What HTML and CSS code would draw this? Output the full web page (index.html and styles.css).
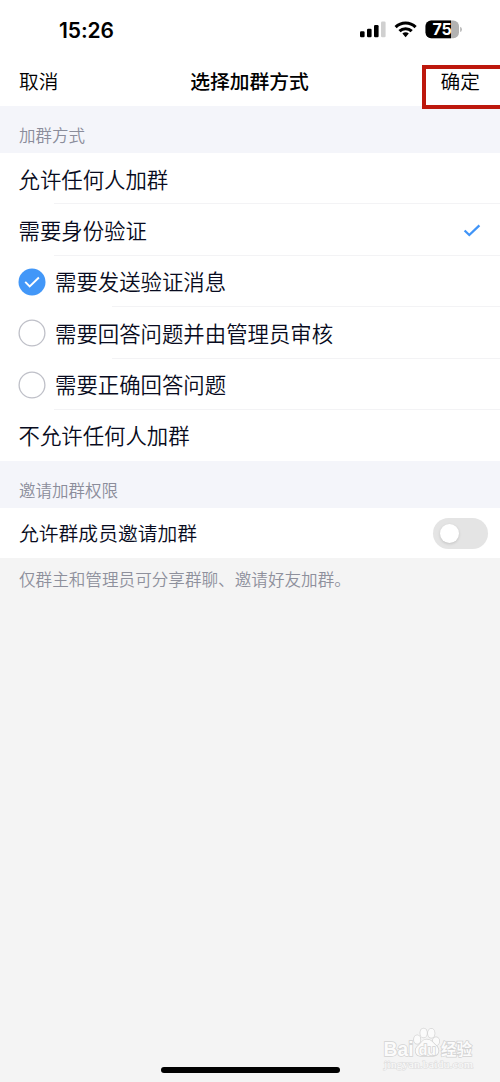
FILE: index.html
```
<!DOCTYPE html>
<html lang="zh-CN">
<head>
<meta charset="utf-8">
<title>选择加群方式</title>
<link rel="stylesheet" href="styles.css">
</head>
<body>
<div class="screen">
  <header class="top">
    <div class="status">
      <span class="time">15:26</span>
      <svg class="status-icons" width="104" height="20" viewBox="0 0 104 20">
        <rect x="0" y="11.2" width="4.6" height="6" rx="1.2"/>
        <rect x="7" y="8.7" width="4.6" height="8.5" rx="1.2"/>
        <rect x="14" y="5" width="4.6" height="12.2" rx="1.2"/>
        <rect x="21" y="1.5" width="4.6" height="15.7" rx="1.2" fill="#d0d0d0"/>
        <g fill="none" stroke="#000" stroke-width="3.1">
          <path d="M35.6 7.1a14.3 14.3 0 0 1 20 0"/>
          <path d="M39.5 11.2a8.7 8.7 0 0 1 12.2 0"/>
        </g>
        <path d="M42.4 13.5a4.6 4.6 0 0 1 6.4 0l-3.2 3.7z"/>
        <clipPath id="battery"><rect x="65.5" y="0.5" width="33.5" height="17.7" rx="5.6"/></clipPath>
        <g clip-path="url(#battery)">
          <rect x="65" y="0" width="35" height="19" fill="#b2b2b2"/>
          <rect x="65" y="0" width="26" height="19"/>
        </g>
        <path d="M100.2 6.700q1.7.6 1.7 2.7t-1.7 2.7z" fill="#b2b2b2"/>
        <text x="82.1" y="15.3" class="battery-level" text-anchor="middle">75</text>
      </svg>
    </div>
    <nav class="nav">
      <span class="action">取消</span>
      <h1 class="title">选择加群方式</h1>
      <span class="action confirm">确定<i class="highlight"></i></span>
    </nav>
  </header>

  <h2 class="section">加群方式</h2>
  <ul class="list">
    <li class="row">允许任何人加群</li>
    <li class="row">需要身份验证
      <svg class="tick" width="18" height="14" viewBox="0 0 18 14"><path d="M1.600 7.500l4.700 4.500L16.400 2.400" fill="none" stroke="#4094f7" stroke-width="2.3"/></svg>
    </li>
    <li class="row inset">
      <svg class="radio" width="28" height="28" viewBox="0 0 28 28"><circle cx="14" cy="14" r="13.5" fill="#4297f8"/><path d="M7.2 13.9l4.500 4.600 9.200-9" fill="none" stroke="#fff" stroke-width="1.9"/></svg>需要发送验证消息</li>
    <li class="row inset">
      <svg class="radio" width="28" height="28" viewBox="0 0 28 28"><circle cx="14" cy="14" r="12.9" fill="#fff" stroke="#bfc0c8" stroke-width="1.3"/></svg>需要回答问题并由管理员审核</li>
    <li class="row">
      <svg class="radio" width="28" height="28" viewBox="0 0 28 28"><circle cx="14" cy="14" r="12.9" fill="#fff" stroke="#bfc0c8" stroke-width="1.3"/></svg>需要正确回答问题</li>
    <li class="row last">不允许任何人加群</li>
  </ul>

  <h2 class="section">邀请加群权限</h2>
  <div class="invite">允许群成员邀请加群<span class="switch"><i class="knob"></i></span></div>
  <p class="note">仅群主和管理员可分享群聊、邀请好友加群。</p>

  <footer class="bottom">
    <svg class="watermark" width="100" height="48" viewBox="0 0 100 48">
      <g class="mark">
        <text x="3.500" y="28.700" class="latin" textLength="30" lengthAdjust="spacingAndGlyphs">Bai</text>
        <ellipse cx="37.2" cy="12.500" rx="3.2" ry="4.3"/>
        <ellipse cx="43.6" cy="5.900" rx="3.3" ry="4.500"/>
        <ellipse cx="51.3" cy="6.300" rx="3.3" ry="4.500"/>
        <ellipse cx="56" cy="14.300" rx="3.2" ry="4"/>
        <path d="M46.500 12.500c-4 0-5 3.500-8 6-5 4-3 10 2 10.500h12.500c5.500-.5 7.500-6 3-10.500-3-2.500-4.500-6-9.500-6z"/>
        <text x="47.3" y="27.500" class="du" text-anchor="middle">du</text>
        <text x="61" y="28" class="cjk" textLength="31" lengthAdjust="spacingAndGlyphs">经验</text>
        <text x="4" y="40.500" class="url" textLength="89" lengthAdjust="spacingAndGlyphs">jingyan.baidu.com</text>
      </g>
    </svg>
    <div class="home-bar"></div>
  </footer>
</div>
</body>
</html>
```
FILE: styles.css
```
* { box-sizing: border-box; }
body {
  margin: 0;
  background: #f4f4f4;
  font-family: "Noto Sans CJK SC", sans-serif;
  font-weight: 350;
  color: #080b20;
}
.screen {
  width: 500px;
  height: 1082px;
  display: flex;
  flex-direction: column;
  overflow: hidden;
}
.top { height: 106px; background: #fff; flex: none; }
.status {
  height: 58px;
  padding: 20px 36px 0 59px;
  display: flex;
  justify-content: space-between;
}
.time {
  font: 600 21px/21px Inter, sans-serif;
  letter-spacing: -0.1px;
  color: #000;
}
.status-icons { display: block; }
.battery-level { font: 700 16px Inter, sans-serif; fill: #fff; }
.nav {
  height: 48px;
  padding: 0 20px 2px 19px;
  display: flex;
  justify-content: space-between;
  align-items: center;
  color: #000;
}
.action { font-size: 19.7px; line-height: 30px; }
.title { margin: 0; font-size: 19.8px; line-height: 30px; font-weight: 500; }
.confirm { position: relative; }
.highlight {
  position: absolute;
  left: -19px;
  top: -1px;
  width: 90px;
  height: 44px;
  border: 4px solid #bd180d;
}
.section {
  flex: none;
  margin: 0;
  height: 47px;
  padding: 17px 19px 0;
  background: #f4f5fa;
  font-size: 16.5px;
  line-height: 25px;
  font-weight: 350;
  color: #8b8d9b;
}
.list { margin: 0; padding: 0; list-style: none; background: #fff; }
.row {
  height: 51.4px;
  padding: 0 19px 0 18.5px;
  display: flex;
  align-items: center;
  font-size: 21.4px;
  line-height: 30px;
  background: linear-gradient(#f3f3f5, #f3f3f5) 54px 100% / 100% 1px no-repeat;
}
.row.inset { background-position-x: 112px; }
.row.last { height: 51px; background: none; }
.tick { margin-left: auto; }
.radio { margin: 1px 9px 0 -0.5px; flex: none; }
.invite {
  flex: none;
  height: 50px;
  padding: 0 12px 0 19px;
  display: flex;
  align-items: center;
  justify-content: space-between;
  background: #fff;
  font-size: 19.8px;
}
.switch {
  width: 55px;
  height: 31px;
  margin-top: 1px;
  padding: 6px 7px;
  border-radius: 16px;
  background: #e4e4e4;
}
.knob {
  display: block;
  width: 19px;
  height: 19px;
  border-radius: 50%;
  background: #fff;
  box-shadow: 0 1px 3px rgba(0, 0, 0, 0.15);
}
.note {
  margin: 0;
  padding: 9px 19px 0;
  font-size: 16.6px;
  line-height: 25px;
  color: #8e909c;
}
.bottom {
  margin-top: auto;
  display: flex;
  flex-direction: column;
  padding-bottom: 9px;
}
.watermark { align-self: flex-end; margin-right: 20px; margin-bottom: -8px; }
.mark { fill: #fbfbfb; stroke: #d2d2d2; stroke-width: 1.5; paint-order: stroke; }
.latin { font: 700 19.5px "Liberation Sans", sans-serif; }
.du { font: 700 14px "Liberation Sans", sans-serif; }
.cjk { font: 700 16px "Noto Sans CJK SC", sans-serif; }
.url { font: 400 11px "Liberation Serif", serif; stroke: #dedede; stroke-width: 1.2; }
.home-bar {
  align-self: center;
  width: 179px;
  height: 6px;
  border-radius: 3px;
  background: #000;
}
```
